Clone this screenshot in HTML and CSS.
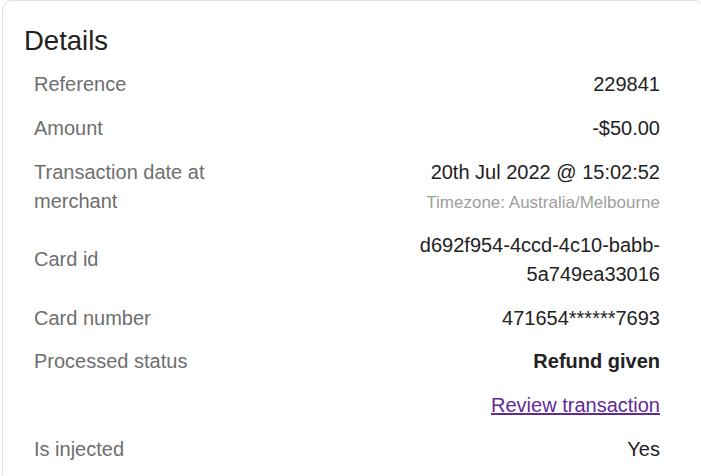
FILE: index.html
```html
<!DOCTYPE html>
<html>
<head>
<meta charset="utf-8">
<link rel="stylesheet" href="styles.css">
</head>
<body>
<section class="card">
  <h2 class="title">Details</h2>
  <div class="table">
    <div class="row"><div class="label">Reference</div><div class="value">229841</div></div>
    <div class="row"><div class="label">Amount</div><div class="value">-$50.00</div></div>
    <div class="row"><div class="label">Transaction date at merchant</div><div class="value">20th Jul 2022 @ 15:02:52<div class="tz">Timezone: Australia/Melbourne</div></div></div>
    <div class="row"><div class="label">Card id</div><div class="value">d692f954-4ccd-4c10-babb-5a749ea33016</div></div>
    <div class="row"><div class="label">Card number</div><div class="value">471654******7693</div></div>
    <div class="row"><div class="label">Processed status</div><div class="value strong">Refund given</div></div>
    <div class="row"><div class="label"></div><div class="value"><a class="link" href="#">Review transaction</a></div></div>
    <div class="row"><div class="label">Is injected</div><div class="value">Yes</div></div>
  </div>
</section>
</body>
</html>
```

FILE: styles.css
```css
html, body {
  margin: 0;
  padding: 0;
  background: #ffffff;
  overflow: hidden;
}
body {
  font-family: "Liberation Sans", Arial, sans-serif;
  color: #222222;
}
.card {
  box-sizing: border-box;
  width: 702px;
  margin-left: 2px;
  border: 1px solid #e0e0e0;
  border-radius: 10px;
  padding: 24px 43px 12px 21px;
}
.title {
  margin: 0;
  font-size: 27.5px;
  line-height: 32px;
  font-weight: 400;
  color: #222222;
}
.table {
  margin: 6px 0 0 10px;
}
.row {
  display: grid;
  grid-template-columns: 240px 1fr;
  column-gap: 20px;
  align-items: center;
  padding: 7.4px 0;
  font-size: 20px;
  line-height: 29px;
}
.label {
  color: #6e6e6e;
}
.value {
  text-align: right;
  color: #222222;
}
.strong {
  font-weight: 700;
}
.tz {
  font-size: 17px;
  line-height: 27px;
  padding-top: 2px;
  color: #9e9e9e;
}
.link {
  color: #5f2a9a;
  text-decoration: underline;
}
```
